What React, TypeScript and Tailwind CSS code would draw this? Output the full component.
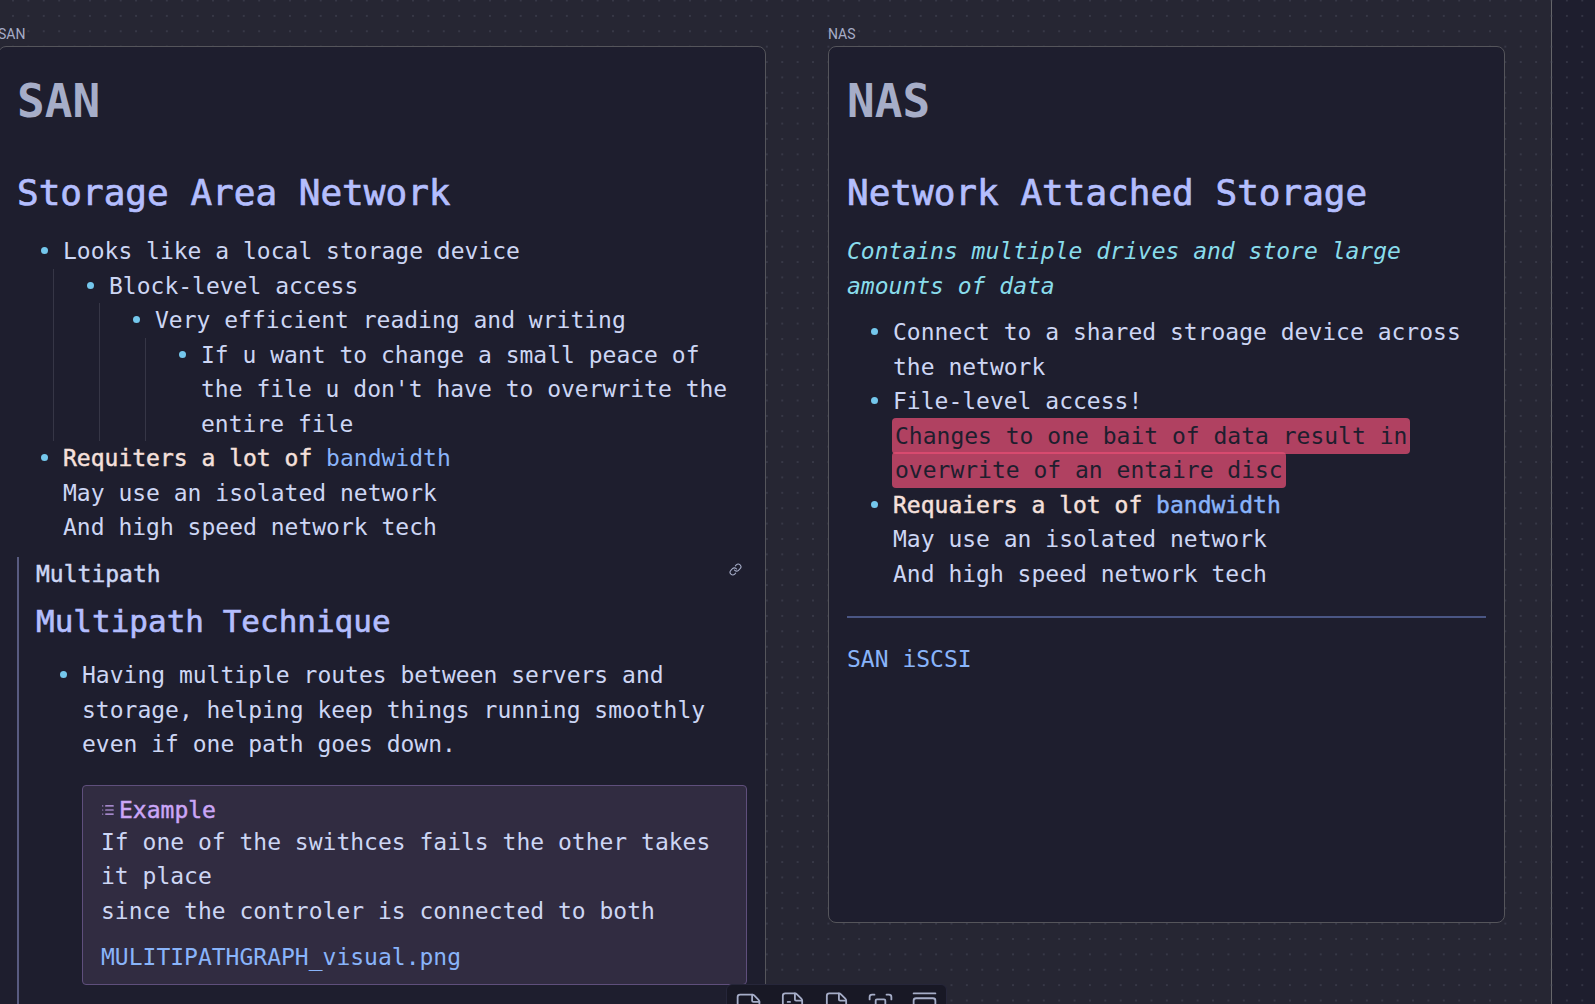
import React from 'react';
import { FileText, File, GalleryVertical, Link, List, StickyNote } from 'lucide-react';

function DotGrid() {
  return (
    <svg className="absolute inset-0 h-full w-full" aria-hidden="true">
      <defs>
        <pattern id="dots" x="5.3" y="-7.2" width="15.385" height="15.385" patternUnits="userSpaceOnUse">
          <circle cx="7.7" cy="7.7" r="0.8" fill="#4c4e60" />
        </pattern>
      </defs>
      <rect width="100%" height="100%" fill="url(#dots)" />
    </svg>
  );
}

function Item({ children }: { children: React.ReactNode }) {
  return (
    <li className="flex">
      <span className="mt-[13px] mr-[15px] size-[7px] shrink-0 rounded-full bg-[#74c7ec]" />
      <div className="min-w-0 flex-1">{children}</div>
    </li>
  );
}

function NestedList({ children }: { children: React.ReactNode }) {
  return <ul className="-ml-[10px] border-l border-[#363646] pl-[33px]">{children}</ul>;
}

function NoteCard({ title, className, children }: { title: string; className: string; children: React.ReactNode }) {
  return (
    <article className="flex min-w-0 flex-col">
      <div className="pt-[26px] pb-1 font-[Roboto,sans-serif] text-[14px] leading-4 text-[#a6adc8]">{title}</div>
      <div className={'rounded-lg border border-[#55555b] bg-[#1e1e2e] px-[18px] pt-[27px] ' + className}>
        <h1 className="text-[46px] leading-[55px] font-bold text-[#a6adc8]">{title}</h1>
        {children}
      </div>
    </article>
  );
}

function Heading({ children }: { children: React.ReactNode }) {
  return (
    <h2 className="mt-[42px] mb-5 text-[36px] leading-[43px] text-[#b4befe] [-webkit-text-stroke:0.02em_currentColor]">
      {children}
    </h2>
  );
}

function Medium({ children }: { children: React.ReactNode }) {
  return <strong className="font-normal [-webkit-text-stroke:0.02em_currentColor]">{children}</strong>;
}

function A({ children }: { children: React.ReactNode }) {
  return <a href="#" className="text-[#89b4fa]">{children}</a>;
}

function FrameIcon() {
  return (
    <svg width="29" height="29" viewBox="0 0 24 24" fill="none" stroke="currentColor" strokeWidth="1.5" strokeLinecap="round" strokeLinejoin="round">
      <path d="M3 7V5a2 2 0 0 1 2-2h2M17 3h2a2 2 0 0 1 2 2v2M21 17v2a2 2 0 0 1-2 2h-2M7 21H5a2 2 0 0 1-2-2v-2" />
      <rect x="8" y="7" width="8" height="10" rx="1" />
    </svg>
  );
}

const tools = [
  { label: 'Add card', icon: <StickyNote size={29} strokeWidth={1.5} /> },
  { label: 'Add note from vault', icon: <FileText size={29} strokeWidth={1.5} /> },
  { label: 'Add media from vault', icon: <File size={29} strokeWidth={1.5} /> },
  { label: 'Create group', icon: <FrameIcon /> },
  { label: 'Templates', icon: <GalleryVertical size={29} strokeWidth={1.5} /> },
];

export default function App() {
  return (
    <main className="relative flex h-screen overflow-hidden bg-[#1e1e2e] font-['DejaVu_Sans_Mono',monospace] text-[23px] leading-normal text-[#cdd6f4]">
      <div className="flex-1 border-r border-[#66666a] bg-[#262633]" />
      <div className="w-[43px]" />
      <DotGrid />
      <div className="absolute inset-0 -ml-[2px] grid grid-cols-[768fr_677fr] items-start gap-[62px] pr-[90px]">
        <NoteCard title="SAN" className="min-h-[1000px]">
          <Heading>Storage Area Network</Heading>
          <ul className="pl-6">
            <Item>
              Looks like a local storage device
              <NestedList>
                <Item>
                  Block-level access
                  <NestedList>
                    <Item>
                      Very efficient reading and writing
                      <NestedList>
                        <Item>If u want to change a small peace of the file u don't have to overwrite the entire file</Item>
                      </NestedList>
                    </Item>
                  </NestedList>
                </Item>
              </NestedList>
            </Item>
            <Item>
              <span className="text-[#f5e0dc]"><Medium>Requiters a lot of</Medium></span> <A>bandwidth</A>
              <br />May use an isolated network
              <br />And high speed network tech
            </Item>
          </ul>
          <section className="mt-3 min-h-[460px] border-l-2 border-[#585b80] pl-[17px]">
            <div className="flex items-start justify-between pr-[5px]">
              <Medium>Multipath</Medium>
              <a href="#" aria-label="Open link" className="mt-[6px] text-[#a6adc8]"><Link size={13} strokeWidth={2} /></a>
            </div>
            <h3 className="mt-3 mb-[18px] text-[31px] leading-[37px] text-[#b4befe] [-webkit-text-stroke:0.02em_currentColor]">Multipath Technique</h3>
            <ul className="pl-6">
              <Item>
                Having multiple routes between servers and storage, helping keep things running smoothly even if one path goes down.
                <aside className="mt-[23px] rounded-sm border border-[#5f4f7c] bg-[#312c41] px-[18px] pt-[10px] pb-[9px]">
                  <div className="flex items-center gap-[4px] leading-[29px] text-[#cba6f7]">
                    <List size={14} strokeWidth={2} />
                    <Medium>Example</Medium>
                  </div>
                  <p>If one of the swithces fails the other takes it place<br />since the controler is connected to both</p>
                  <p className="mt-3"><A>MULITIPATHGRAPH_visual.png</A></p>
                </aside>
              </Item>
            </ul>
          </section>
        </NoteCard>
        <NoteCard title="NAS" className="min-h-[877px]">
          <Heading>Network Attached Storage</Heading>
          <p className="mb-3 text-[#89dceb] italic">Contains multiple drives and store large amounts of data</p>
          <ul className="pl-6">
            <Item>Connect to a shared stroage device across the network</Item>
            <Item>
              File-level access!
              <br />
              <mark className="-mx-px rounded bg-[#e64e75]/73 box-decoration-clone px-[3px] py-[5px] text-[#1e1e2e]">Changes to one bait of data result in overwrite of an entaire disc</mark>
            </Item>
            <Item>
              <span className="text-[#f5e0dc]"><Medium>Requaiers a lot of <A>bandwidth</A></Medium></span>
              <br />May use an isolated network
              <br />And high speed network tech
            </Item>
          </ul>
          <hr className="mt-[25px] mb-6 border-t-2 border-[#4a5684]" />
          <p><A>SAN iSCSI</A></p>
        </NoteCard>
      </div>
      <nav className="absolute top-[984px] left-[726px] flex gap-px rounded-md border border-[#26263a] bg-[#181825] text-[#a6adc8]">
        {tools.map((t) => (
          <button key={t.label} type="button" aria-label={t.label} className="px-[7px] py-[6px]">{t.icon}</button>
        ))}
      </nav>
    </main>
  );
}
